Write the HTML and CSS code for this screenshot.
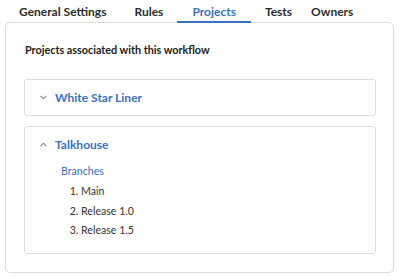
FILE: index.html
```html
<!DOCTYPE html>
<html>
<head>
<meta charset="utf-8">
<link rel="stylesheet" href="styles.css">
</head>
<body>
<nav class="tabs">
  <div class="tab">General Settings</div>
  <div class="tab">Rules</div>
  <div class="tab active">Projects</div>
  <div class="tab tab-tight">Tests</div>
  <div class="tab">Owners</div>
</nav>
<section class="card">
  <h2 class="heading">Projects associated with this workflow</h2>
  <div class="acc">
    <div class="acc-head">
      <svg class="chev" width="7" height="5" viewBox="0 0 7 5"><path d="M0.5 0.8 L3.5 3.8 L6.5 0.8" fill="none" stroke="#8a8a8a" stroke-width="1.1"/></svg>
      <span class="acc-title">White Star Liner</span>
    </div>
  </div>
  <div class="acc">
    <div class="acc-head">
      <svg class="chev" width="7" height="5" viewBox="0 0 7 5"><path d="M0.5 4.2 L3.5 1.2 L6.5 4.2" fill="none" stroke="#8a8a8a" stroke-width="1.1"/></svg>
      <span class="acc-title">Talkhouse</span>
    </div>
    <div class="acc-body">
      <div class="branches">Branches</div>
      <ol class="list">
        <li>Main</li>
        <li>Release 1.0</li>
        <li>Release 1.5</li>
      </ol>
    </div>
  </div>
</section>
</body>
</html>
```
FILE: styles.css
```css
html, body {
  margin: 0;
  padding: 0;
  background: #fff;
  font-family: Lato, "Open Sans", sans-serif;
  color: #333;
}
.tabs {
  display: flex;
  padding-left: 5px;
  height: 23px;
}
.tab {
  padding: 3px 14px 0;
  font-size: 12px;
  font-weight: 700;
  color: #2c2c2c;
  line-height: 17px;
  box-sizing: border-box;
  height: 23px;
  border-bottom: 2px solid transparent;
  position: relative;
  z-index: 1;
}
.tab.active {
  color: #3a72bd;
  border-bottom-color: #3a72bd;
  padding-left: 15px;
  padding-right: 15px;
}
.tab.tab-tight {
  padding-right: 5px;
}
.card {
  margin: -1px 6px 0 5px;
  border: 1px solid #dcdcdc;
  border-radius: 5px;
  padding: 14px 17px 18px 18px;
}
.heading {
  margin: 0 0 17px 1px;
  font-size: 10.8px;
  font-weight: 700;
  color: #222;
  line-height: 25px;
}
.acc {
  border: 1px solid #dcdcdc;
  border-radius: 3px;
  margin-bottom: 10px;
}
.acc:last-child { margin-bottom: 0; }
.acc-head {
  display: flex;
  align-items: center;
  height: 35px;
  padding-left: 15px;
  gap: 8px;
}
.chev { flex: none; }
.acc-title {
  font-size: 12px;
  font-weight: 700;
  color: #3a72bd;
}
.acc-body {
  padding: 0 0 12px 36px;
}
.branches {
  font-size: 10.6px;
  color: #3a72bd;
  line-height: 16px;
  margin-top: 1px;
}
.list {
  margin: 3px 0 0;
  padding-left: 20px;
  font-size: 10.6px;
  color: #333;
  line-height: 19.5px;
}
```
